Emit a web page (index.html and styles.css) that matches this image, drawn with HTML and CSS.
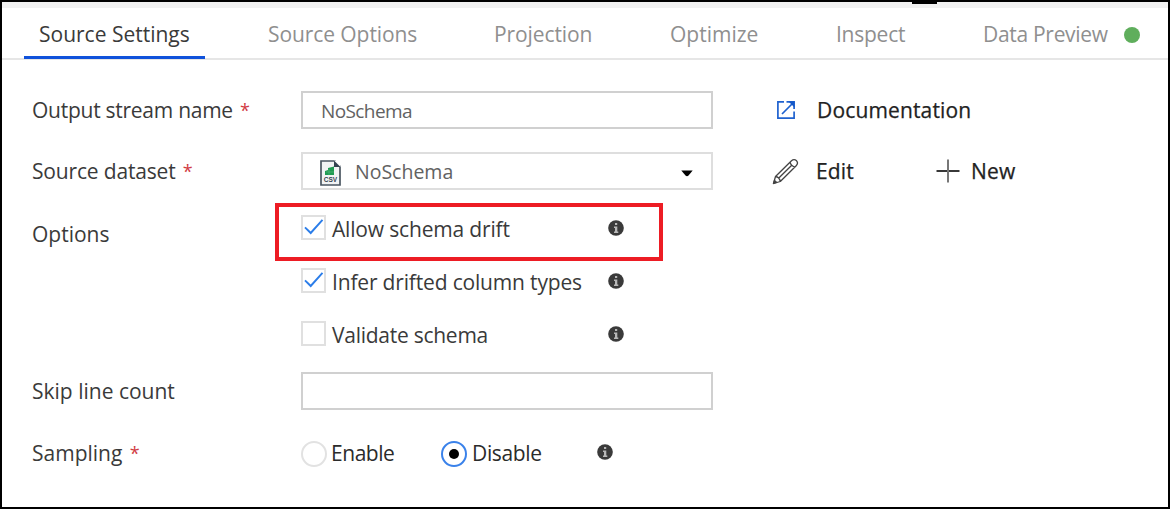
FILE: index.html
```html
<!DOCTYPE html>
<html lang="en">
<head>
<meta charset="utf-8">
<title>Source Settings</title>
<link rel="stylesheet" href="styles.css">
</head>
<body>
<svg class="defs" width="0" height="0">
  <symbol id="info" viewBox="0 0 16 16">
    <circle cx="8" cy="8" r="7.8" fill="#3a3a3a"/>
    <path d="M7 3h2.2v2H7zM6 6.5h3.3v5h1V13H6v-1.5h1V8H6z" fill="#b8b8b8"/>
  </symbol>
  <symbol id="tick" viewBox="0 0 25 25">
    <path d="M4 12.3L9.7 18L21.5 4.8" fill="none" stroke="#2b7de9" stroke-width="1.9"/>
  </symbol>
</svg>
<main class="frame">
  <div class="strip"><span class="handle"></span></div>
  <nav class="tabs">
    <a class="tab tab-settings active">Source Settings</a>
    <a class="tab tab-options">Source Options</a>
    <a class="tab tab-projection">Projection</a>
    <a class="tab tab-optimize">Optimize</a>
    <a class="tab tab-inspect">Inspect</a>
    <a class="tab tab-preview">Data Preview</a>
    <span class="status"></span>
  </nav>
  <form class="form">
    <div class="row row-stream">
      <label class="label tight">Output stream name <span class="req">*</span></label>
      <div class="box"><span class="value value-input">NoSchema</span></div>
      <svg class="link-icon" width="20" height="20" viewBox="0 0 20 20" fill="none" stroke="#1f62cf" stroke-width="1.7">
        <path d="M8 1.9H1.9V18.1H18.1V11.5M6 14L17 3M10.5 1.9H18.1V9"/>
        <path d="M12.5 1.5H18.5V7.5z" fill="#1458c9" stroke="none"/>
      </svg>
      <span class="action">Documentation</span>
    </div>
    <div class="row row-dataset">
      <label class="label snug">Source dataset <span class="req">*</span></label>
      <div class="box select">
        <svg class="csv" width="21" height="26" viewBox="0 0 21 26">
          <path d="M1 1H15L20 6V25H1z" fill="#f1f3f4" stroke="#4a5661" stroke-width="1.7"/>
          <path d="M14 0.5L20.5 7V1z" fill="#fff"/>
          <path d="M14 0.8L20.3 7H14z" fill="#344250"/>
          <path d="M5 15V11L8 10V8L14 6.5V15z" fill="#1f9b52"/>
          <path d="M6 12H14M9 9V15" stroke="#5dbb82" stroke-width=".6"/>
          <text x="10.5" y="22" class="csv-text" text-anchor="middle">CSV</text>
        </svg>
        <span class="value value-select">NoSchema</span>
        <svg class="caret" width="12" height="7" viewBox="0 0 12 7"><path d="M0.3 0.5H11.7L7.5 5.5Q6 7 4.5 5.5z" fill="#000"/></svg>
      </div>
      <svg class="pencil" width="27" height="27" viewBox="0 0 27 27" fill="none" stroke="#444" stroke-width="1.3" stroke-linejoin="round">
        <path d="M1.5 25.5L3.5 18.5L19.5 2.8Q22 .5 24.6 2.8Q26.6 5.3 24.2 7.7L8.3 23.5zM3.5 18.5Q7.5 19 8.3 23.5M18 4.2Q19 8 22.8 9.1M6.8 20L20 7"/>
        <path d="M1.5 25.5L2.5 22.4L4.7 24.5z" fill="#333"/>
      </svg>
      <span class="action action-edit">Edit</span>
      <svg class="plus" width="24" height="24" viewBox="0 0 24 24"><path d="M0.5 12H23.5" stroke="#222" stroke-width="1.8"/><path d="M12 .5V23.5" stroke="#777" stroke-width="2"/></svg>
      <span class="action">New</span>
    </div>
    <div class="options">
      <label class="label options-label">Options</label>
      <div class="checks">
        <div class="check highlighted"><span class="checkbox"><svg width="25" height="25"><use href="#tick"/></svg></span><span class="check-text snug">Allow schema drift</span><svg class="info" width="16" height="16"><use href="#info"/></svg></div>
        <div class="check"><span class="checkbox"><svg width="25" height="25"><use href="#tick"/></svg></span><span class="check-text snug">Infer drifted column types</span><svg class="info" width="16" height="16"><use href="#info"/></svg></div>
        <div class="check"><span class="checkbox"></span><span class="check-text tight">Validate schema</span><svg class="info" width="16" height="16"><use href="#info"/></svg></div>
      </div>
    </div>
    <div class="row row-skip">
      <label class="label">Skip line count</label>
      <div class="box"></div>
    </div>
    <div class="row row-sampling">
      <label class="label">Sampling <span class="req">*</span></label>
      <span class="radio"></span><span class="radio-text enable">Enable</span>
      <span class="radio selected"></span><span class="radio-text disable">Disable</span>
      <svg class="info" width="16" height="16"><use href="#info"/></svg>
    </div>
  </form>
</main>
</body>
</html>
```
FILE: styles.css
```css
* { box-sizing: border-box; }
body { margin: 0; background: #fff; font: 21px/28px "Open Sans", "Noto Sans", sans-serif; color: #3a3a3a; }
svg { display: block; flex: none; }
.defs { position: absolute; }
.frame { width: 1170px; height: 509px; border: 2px solid #000; overflow: hidden; }
.strip { height: 6px; background: #f1f1f1; padding-left: 910px; }
.handle { display: block; width: 25px; height: 2px; background: #000; }

.tabs { display: flex; height: 52px; border-bottom: 2px solid #e6e6e6; padding-left: 22px; color: #8f8f8f; white-space: nowrap; }
.tab { height: 51px; padding-top: 12px; flex: none; }
.tab-settings { width: 181px; padding-left: 15px; margin-right: 63px; }
.tab.active { color: #3a3a3a; border-bottom: 3px solid #1052db; }
.tab-options { width: 226px; letter-spacing: -0.08px; }
.tab-projection { width: 176px; letter-spacing: -0.1px; }
.tab-optimize { width: 166px; }
.tab-inspect { width: 147px; letter-spacing: -0.25px; }
.tab-preview { width: 141px; letter-spacing: -0.3px; }
.status { width: 16px; height: 16px; margin-top: 19px; border-radius: 50%; background: #5fae5c; }

.form { padding: 31px 0 0 30px; }
.row { display: flex; align-items: center; white-space: nowrap; }
.label { width: 269px; flex: none; }
.tight { letter-spacing: -0.26px; }
.snug { letter-spacing: -0.17px; }
.req { color: #d13b43; margin-left: 2px; font-size: 18px; line-height: 20px; vertical-align: 1px; }
.box { display: flex; align-items: center; width: 412px; height: 38px; border: 2px solid #d0d0d0; flex: none; }
.value { color: #626262; }
.value-input { font-size: 19px; letter-spacing: -0.6px; padding: 1px 0 0 18px; }
.value-select { font-size: 19.5px; width: 340px; padding: 1px 0 0 14px; }
.select { border-color: #dedede; padding-left: 17px; }
.csv { margin-top: 3px; }
.csv-text { font: bold 6.5px "Liberation Sans", sans-serif; fill: #344250; }
.caret { margin-top: 4px; }

.row-stream { height: 38px; }
.link-icon { margin: 0 21px 0 63px; }
.action { color: #222; letter-spacing: .15px; -webkit-text-stroke: .25px #222; padding-bottom: 1px; }
.row-dataset { height: 38px; margin-top: 23px; }
.pencil { margin: 0 17px 0 59px; }
.action-edit { width: 120px; }
.plus { margin-right: 11px; }

.options { display: flex; margin-top: 13px; height: 157px; }
.options-label { width: 243px; padding-top: 17px; }
.checks { width: 388px; }
.check { display: flex; height: 53px; padding: 8px 0 0 26px; white-space: nowrap; }
.check.highlighted { height: 58px; border: 4px solid #ed1c24; padding: 8px 0 0 22px; margin-bottom: -1px; }
.checkbox { width: 25px; height: 25px; border: 2px solid #e0e0e0; flex: none; margin-right: 6px; }
.checkbox svg { margin: -2px; }
.check-text { width: 276px; flex: none; }

.row-skip { height: 38px; margin-top: 12px; }
.row-sampling { height: 26px; margin-top: 31px; }
.radio { width: 26px; height: 26px; border: 2px solid #e2e2e2; border-radius: 50%; flex: none; display: flex; align-items: center; justify-content: center; }
.radio.selected { border-color: #3a82ea; }
.radio.selected::after { content: ""; width: 10px; height: 10px; border-radius: 50%; background: #000; }
.radio-text { color: #2b2b2b; padding-bottom: 3px; }
.row-sampling .label { padding-bottom: 2px; }
.enable { width: 110px; padding-left: 4px; letter-spacing: -0.45px; margin-right: 4px; }
.disable { width: 130px; padding-left: 5px; letter-spacing: -0.35px; }
.row-sampling .info { margin-bottom: 5px; }
.check .info { margin-top: 5px; }
```
